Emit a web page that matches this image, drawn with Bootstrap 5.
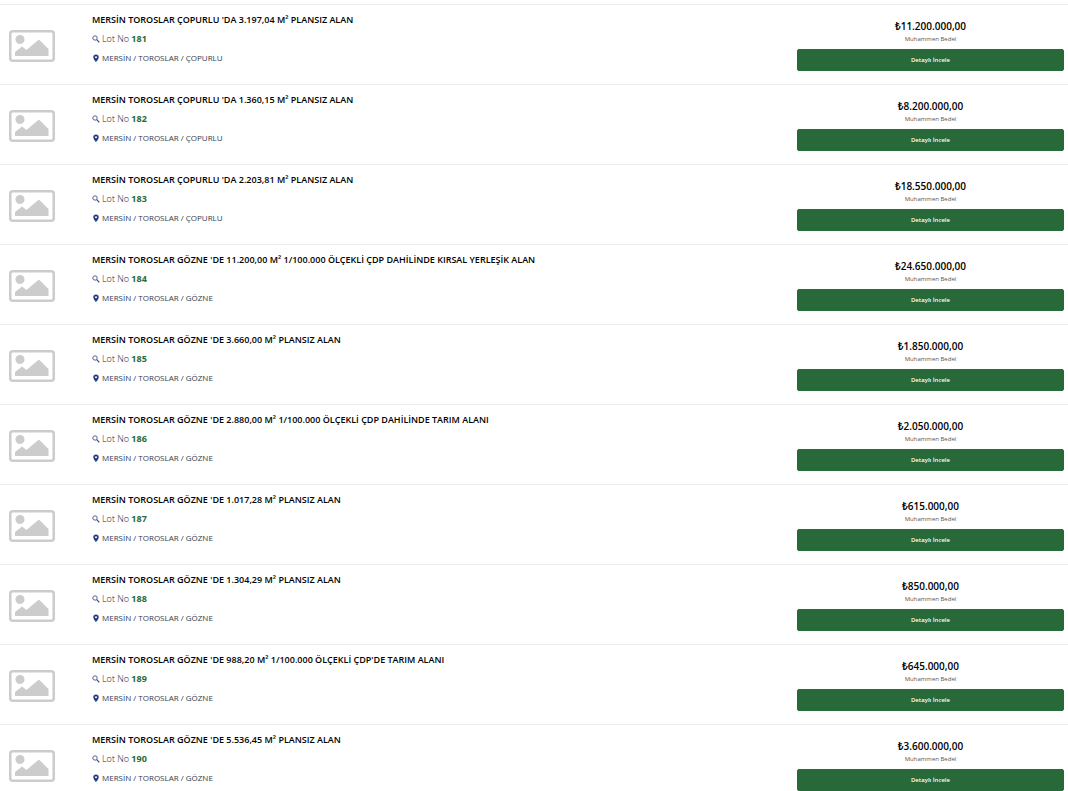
<!DOCTYPE html>
<html lang="tr">
<head>
<meta charset="utf-8">
<meta name="viewport" content="width=device-width, initial-scale=1">
<title>İhale Lot Listesi</title>
<link href="https://cdn.jsdelivr.net/npm/bootstrap@5.3.0/dist/css/bootstrap.min.css" rel="stylesheet">
<style>
body { font-family: "Open Sans", "Noto Sans", sans-serif; background: #fff; color: #1d2636; }
.lot { border-top: 1px solid #ececec; min-height: 80px; }
.lot:last-child { min-height: 0; }
.lot-photo { width: 92px; padding: 25px 0 0 9px; }
.lot-photo svg { width: 46px; height: 32px; display: block; }
.lot-info { padding-top: 5px; }
.lot-title { font-size: 9px; line-height: 20px; font-weight: 600; color: #000; }
.lot-line { font-size: 9px; line-height: 18px; gap: 2px; font-weight: 300; }
.lot-place { font-size: 8px; line-height: 20px; font-weight: 400; color: #333c4a; }
.lot-line svg { width: 8px; height: 8px; color: #27407c; }
.lot-line strong { color: #276b36; font-weight: 700; }
.lot-offer { padding-top: 13px; }
.lot-price { font-size: 10px; line-height: 16px; font-weight: 600; color: #000; }
.lot-caption { font-size: 6px; line-height: 10px; color: #555; margin-bottom: 5px; }
.btn-lot { --bs-btn-color: #fff; --bs-btn-bg: #276938; --bs-btn-border-color: #276938; --bs-btn-hover-color: #fff; --bs-btn-hover-bg: #1f562d; --bs-btn-padding-y: 0; --bs-btn-font-size: 6px; --bs-btn-border-radius: 2px; --bs-btn-font-weight: 600; line-height: 20px; }
</style>
</head>
<body>
<svg class="d-none" aria-hidden="true">
  <symbol id="photo" viewBox="0 0 46 32"><rect x="1.25" y="1.25" width="43.5" height="29.5" rx="2.5" fill="#fff" stroke="#ccc" stroke-width="2.5"/><circle cx="11" cy="9.5" r="4.5" fill="#ccc"/><path d="M6 26v-4l7-5.500 4.500 3.500L30 9.500l9.500 9.500V26z" fill="#ccc"/></symbol>
  <symbol id="search" viewBox="0 0 8 8"><circle cx="3" cy="3" r="2.2" fill="none" stroke="currentColor" stroke-width=".8"/><path d="M4.700 4.700 7.300 7.300" stroke="currentColor" stroke-width="1.100"/></symbol>
  <symbol id="pin" viewBox="0 0 8 8"><path fill="currentColor" fill-rule="evenodd" d="M4 .5a2.700 2.700 0 0 0-2.700 2.700C1.300 5.200 4 8 4 8s2.700-2.800 2.700-4.800A2.700 2.700 0 0 0 4 .5zm0 1.700a1 1 0 1 1 0 2 1 1 0 0 1 0-2z"/></symbol>
</svg>
<main class="pt-1">
  <article class="lot d-flex">
    <div class="lot-photo flex-shrink-0"><svg><use href="#photo"/></svg></div>
    <div class="lot-info flex-grow-1"><h2 class="lot-title mb-0">MERSİN TOROSLAR ÇOPURLU 'DA 3.197,04 M² PLANSIZ ALAN</h2><div class="lot-line d-flex align-items-center"><svg><use href="#search"/></svg><span>Lot No <strong>181</strong></span></div><div class="lot-line lot-place d-flex align-items-center"><svg><use href="#pin"/></svg><span>MERSİN / TOROSLAR / ÇOPURLU</span></div></div>
    <div class="lot-offer w-25 me-1 flex-shrink-0 text-center"><div class="lot-price">₺11.200.000,00</div><div class="lot-caption">Muhammen Bedel</div><button type="button" class="btn btn-lot d-block w-100">Detaylı İncele</button></div>
  </article>
  <article class="lot d-flex">
    <div class="lot-photo flex-shrink-0"><svg><use href="#photo"/></svg></div>
    <div class="lot-info flex-grow-1"><h2 class="lot-title mb-0">MERSİN TOROSLAR ÇOPURLU 'DA 1.360,15 M² PLANSIZ ALAN</h2><div class="lot-line d-flex align-items-center"><svg><use href="#search"/></svg><span>Lot No <strong>182</strong></span></div><div class="lot-line lot-place d-flex align-items-center"><svg><use href="#pin"/></svg><span>MERSİN / TOROSLAR / ÇOPURLU</span></div></div>
    <div class="lot-offer w-25 me-1 flex-shrink-0 text-center"><div class="lot-price">₺8.200.000,00</div><div class="lot-caption">Muhammen Bedel</div><button type="button" class="btn btn-lot d-block w-100">Detaylı İncele</button></div>
  </article>
  <article class="lot d-flex">
    <div class="lot-photo flex-shrink-0"><svg><use href="#photo"/></svg></div>
    <div class="lot-info flex-grow-1"><h2 class="lot-title mb-0">MERSİN TOROSLAR ÇOPURLU 'DA 2.203,81 M² PLANSIZ ALAN</h2><div class="lot-line d-flex align-items-center"><svg><use href="#search"/></svg><span>Lot No <strong>183</strong></span></div><div class="lot-line lot-place d-flex align-items-center"><svg><use href="#pin"/></svg><span>MERSİN / TOROSLAR / ÇOPURLU</span></div></div>
    <div class="lot-offer w-25 me-1 flex-shrink-0 text-center"><div class="lot-price">₺18.550.000,00</div><div class="lot-caption">Muhammen Bedel</div><button type="button" class="btn btn-lot d-block w-100">Detaylı İncele</button></div>
  </article>
  <article class="lot d-flex">
    <div class="lot-photo flex-shrink-0"><svg><use href="#photo"/></svg></div>
    <div class="lot-info flex-grow-1"><h2 class="lot-title mb-0">MERSİN TOROSLAR GÖZNE 'DE 11.200,00 M² 1/100.000 ÖLÇEKLİ ÇDP DAHİLİNDE KIRSAL YERLEŞİK ALAN</h2><div class="lot-line d-flex align-items-center"><svg><use href="#search"/></svg><span>Lot No <strong>184</strong></span></div><div class="lot-line lot-place d-flex align-items-center"><svg><use href="#pin"/></svg><span>MERSİN / TOROSLAR / GÖZNE</span></div></div>
    <div class="lot-offer w-25 me-1 flex-shrink-0 text-center"><div class="lot-price">₺24.650.000,00</div><div class="lot-caption">Muhammen Bedel</div><button type="button" class="btn btn-lot d-block w-100">Detaylı İncele</button></div>
  </article>
  <article class="lot d-flex">
    <div class="lot-photo flex-shrink-0"><svg><use href="#photo"/></svg></div>
    <div class="lot-info flex-grow-1"><h2 class="lot-title mb-0">MERSİN TOROSLAR GÖZNE 'DE 3.660,00 M² PLANSIZ ALAN</h2><div class="lot-line d-flex align-items-center"><svg><use href="#search"/></svg><span>Lot No <strong>185</strong></span></div><div class="lot-line lot-place d-flex align-items-center"><svg><use href="#pin"/></svg><span>MERSİN / TOROSLAR / GÖZNE</span></div></div>
    <div class="lot-offer w-25 me-1 flex-shrink-0 text-center"><div class="lot-price">₺1.850.000,00</div><div class="lot-caption">Muhammen Bedel</div><button type="button" class="btn btn-lot d-block w-100">Detaylı İncele</button></div>
  </article>
  <article class="lot d-flex">
    <div class="lot-photo flex-shrink-0"><svg><use href="#photo"/></svg></div>
    <div class="lot-info flex-grow-1"><h2 class="lot-title mb-0">MERSİN TOROSLAR GÖZNE 'DE 2.880,00 M² 1/100.000 ÖLÇEKLİ ÇDP DAHİLİNDE TARIM ALANI</h2><div class="lot-line d-flex align-items-center"><svg><use href="#search"/></svg><span>Lot No <strong>186</strong></span></div><div class="lot-line lot-place d-flex align-items-center"><svg><use href="#pin"/></svg><span>MERSİN / TOROSLAR / GÖZNE</span></div></div>
    <div class="lot-offer w-25 me-1 flex-shrink-0 text-center"><div class="lot-price">₺2.050.000,00</div><div class="lot-caption">Muhammen Bedel</div><button type="button" class="btn btn-lot d-block w-100">Detaylı İncele</button></div>
  </article>
  <article class="lot d-flex">
    <div class="lot-photo flex-shrink-0"><svg><use href="#photo"/></svg></div>
    <div class="lot-info flex-grow-1"><h2 class="lot-title mb-0">MERSİN TOROSLAR GÖZNE 'DE 1.017,28 M² PLANSIZ ALAN</h2><div class="lot-line d-flex align-items-center"><svg><use href="#search"/></svg><span>Lot No <strong>187</strong></span></div><div class="lot-line lot-place d-flex align-items-center"><svg><use href="#pin"/></svg><span>MERSİN / TOROSLAR / GÖZNE</span></div></div>
    <div class="lot-offer w-25 me-1 flex-shrink-0 text-center"><div class="lot-price">₺615.000,00</div><div class="lot-caption">Muhammen Bedel</div><button type="button" class="btn btn-lot d-block w-100">Detaylı İncele</button></div>
  </article>
  <article class="lot d-flex">
    <div class="lot-photo flex-shrink-0"><svg><use href="#photo"/></svg></div>
    <div class="lot-info flex-grow-1"><h2 class="lot-title mb-0">MERSİN TOROSLAR GÖZNE 'DE 1.304,29 M² PLANSIZ ALAN</h2><div class="lot-line d-flex align-items-center"><svg><use href="#search"/></svg><span>Lot No <strong>188</strong></span></div><div class="lot-line lot-place d-flex align-items-center"><svg><use href="#pin"/></svg><span>MERSİN / TOROSLAR / GÖZNE</span></div></div>
    <div class="lot-offer w-25 me-1 flex-shrink-0 text-center"><div class="lot-price">₺850.000,00</div><div class="lot-caption">Muhammen Bedel</div><button type="button" class="btn btn-lot d-block w-100">Detaylı İncele</button></div>
  </article>
  <article class="lot d-flex">
    <div class="lot-photo flex-shrink-0"><svg><use href="#photo"/></svg></div>
    <div class="lot-info flex-grow-1"><h2 class="lot-title mb-0">MERSİN TOROSLAR GÖZNE 'DE 988,20 M² 1/100.000 ÖLÇEKLİ ÇDP'DE TARIM ALANI</h2><div class="lot-line d-flex align-items-center"><svg><use href="#search"/></svg><span>Lot No <strong>189</strong></span></div><div class="lot-line lot-place d-flex align-items-center"><svg><use href="#pin"/></svg><span>MERSİN / TOROSLAR / GÖZNE</span></div></div>
    <div class="lot-offer w-25 me-1 flex-shrink-0 text-center"><div class="lot-price">₺645.000,00</div><div class="lot-caption">Muhammen Bedel</div><button type="button" class="btn btn-lot d-block w-100">Detaylı İncele</button></div>
  </article>
  <article class="lot d-flex">
    <div class="lot-photo flex-shrink-0"><svg><use href="#photo"/></svg></div>
    <div class="lot-info flex-grow-1"><h2 class="lot-title mb-0">MERSİN TOROSLAR GÖZNE 'DE 5.536,45 M² PLANSIZ ALAN</h2><div class="lot-line d-flex align-items-center"><svg><use href="#search"/></svg><span>Lot No <strong>190</strong></span></div><div class="lot-line lot-place d-flex align-items-center"><svg><use href="#pin"/></svg><span>MERSİN / TOROSLAR / GÖZNE</span></div></div>
    <div class="lot-offer w-25 me-1 flex-shrink-0 text-center"><div class="lot-price">₺3.600.000,00</div><div class="lot-caption">Muhammen Bedel</div><button type="button" class="btn btn-lot d-block w-100">Detaylı İncele</button></div>
  </article>
</main>
<script src="https://cdn.jsdelivr.net/npm/bootstrap@5.3.0/dist/js/bootstrap.bundle.min.js"></script>
</body>
</html>
